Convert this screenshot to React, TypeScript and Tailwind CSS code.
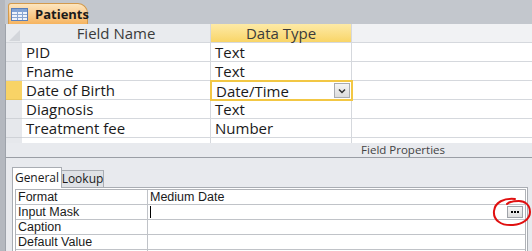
import React from "react";

const rows = [
  { name: "PID", type: "Text" },
  { name: "Fname", type: "Text" },
  { name: "Date of Birth", type: "Date/Time", active: true },
  { name: "Diagnosis", type: "Text" },
  { name: "Treatment fee", type: "Number" },
];

const props = [
  { name: "Format", value: "Medium Date" },
  { name: "Input Mask", value: "", caret: true, builder: true },
  { name: "Caption", value: "" },
  { name: "Default Value", value: "" },
  { name: "", value: "" },
];

function TableIcon() {
  return (
    <svg width="17" height="13" viewBox="0 0 17 13" className="shrink-0">
      <rect x="0.5" y="0.5" width="16" height="12" fill="#eef3fb" stroke="#5b7fb8" />
      <rect x="1" y="1" width="15" height="3" fill="#7fa2d6" />
      <line x1="1" y1="6.5" x2="16" y2="6.5" stroke="#8aa6d0" />
      <line x1="1" y1="9.5" x2="16" y2="9.5" stroke="#8aa6d0" />
      <line x1="6.5" y1="1" x2="6.5" y2="12" stroke="#8aa6d0" />
      <line x1="11.5" y1="1" x2="11.5" y2="12" stroke="#8aa6d0" />
    </svg>
  );
}

export default function App() {
  return (
    <div
      className="w-[532px] h-[251px] overflow-hidden bg-[#c3c7cd] flex flex-col text-[#1a1a1a]"
      style={{ fontFamily: '"Open Sans", "Noto Sans", sans-serif' }}
    >
      {/* tab bar */}
      <div className="h-[24px] flex items-end pl-[3px] border-l-[5px] border-[#b4b8bf] shrink-0 relative">
        <div className="h-[21px] w-[80px] flex items-center gap-[7px] pl-[2px] rounded-tl-[3px] rounded-tr-[10px] bg-gradient-to-b from-[#fde6bf] to-[#f6b45e] border border-b-0 border-[#d39a4d] text-[13px] font-bold">
          <TableIcon />
          <span className="leading-none">Patients</span>
        </div>
      </div>

      {/* body */}
      <div className="flex-1 flex flex-col border-l-[5px] border-[#b4b8bf] bg-[#e8eaee] relative">
        <div className="absolute left-0 top-0 bottom-0 w-px bg-[#9ea3ab]" />
        {/* upper grid */}
        <div className="h-[119px] bg-white flex flex-col overflow-hidden shrink-0 text-[15px] leading-[18px]">
          {/* header */}
          <div className="h-[19px] flex shrink-0 bg-[#e9ebee] border-b border-[#d5d8dd]">
            <div className="w-[17px] shrink-0 relative">
              <svg width="17" height="19" className="absolute left-0 top-0">
                <polygon points="4,17 15,6 15,17" fill="#d3d6db" />
              </svg>
            </div>
            <div className="w-[189px] shrink-0 flex items-center justify-center text-[#3b3b3b] border-r border-[#d5d8dd]">
              Field Name
            </div>
            <div className="w-[141px] shrink-0 flex items-center justify-center text-[#3b3b3b] bg-gradient-to-b from-[#fdeaa6] to-[#f9d566] border-r border-[#d5d8dd]">
              Data Type
            </div>
            <div className="flex-1 bg-[#f1f2f4]" />
          </div>
          {rows.map((r) => (
            <div key={r.name} className="h-[19px] flex shrink-0">
              <div
                className={`w-[17px] shrink-0 border-b ${
                  r.active ? "bg-[#f8d366] border-[#e9c65c]" : "bg-[#e6e8ec] border-[#cfd2d7]"
                }`}
              />
              <div className="w-[189px] shrink-0 flex items-center pl-[4px] border-b border-r border-[#d5d8dd]">
                {r.name}
              </div>
              {r.active ? (
                <div className="w-[143px] -ml-px -mt-px h-[21px] -mb-px shrink-0 flex items-center pl-[4px] pr-[1px] border-2 border-[#f2c744] bg-white relative z-10">
                  <span className="flex-1">{r.type}</span>
                  <div className="w-[16px] h-[15px] flex items-center justify-center border border-[#a8abb0] bg-gradient-to-b from-[#f4f4f4] to-[#dcdcdc]">
                    <svg width="8" height="6" viewBox="0 0 8 6">
                      <path d="M1 1.5 L4 4.5 L7 1.5" fill="none" stroke="#333" strokeWidth="1.5" />
                    </svg>
                  </div>
                </div>
              ) : (
                <div className="w-[141px] shrink-0 flex items-center pl-[4px] border-b border-r border-[#d5d8dd]">
                  {r.type}
                </div>
              )}
              <div className="flex-1 border-b border-[#d5d8dd]" />
            </div>
          ))}
          <div className="flex-1 flex">
            <div className="w-[17px] shrink-0 bg-[#e6e8ec]" />
            <div className="w-[189px] shrink-0 border-r border-[#d5d8dd]" />
            <div className="w-[141px] shrink-0 border-r border-[#d5d8dd]" />
          </div>
        </div>

        {/* field properties label */}
        <div className="h-[15px] shrink-0 border-b border-[#9a9ea5] flex items-end justify-end pr-[87px] text-[11.5px] leading-[14px] text-[#444]">
          Field Properties
        </div>

        {/* properties area */}
        <div className="flex-1 flex flex-col pl-[7px] pr-[4px] pt-[9px] text-[12px]">
          <div className="flex items-end h-[20px] shrink-0">
            <div className="h-[21px] w-[50px] flex items-center justify-center border border-b-0 border-[#a9adb3] bg-white relative z-10 -mb-px">
              General
            </div>
            <div className="h-[17px] w-[42px] flex items-center justify-center border border-l-0 border-b-0 border-[#a9adb3] bg-[#dfe2e6]">
              Lookup
            </div>
          </div>
          <div
            className="flex-1 border border-[#a9adb3] border-b-0 bg-white pl-[2px] pr-[1px] pt-[1px] text-[12.5px]"
            style={{ fontFamily: '"Liberation Sans", Arial, sans-serif' }}
          >
            <div className="border-l border-r border-t border-[#b0b3b8] relative">
              {props.map((p, i) => (
                <div key={i} className="h-[15px] flex border-b border-[#c0c3c8] leading-[14px]">
                  <div className="w-[132px] shrink-0 pl-[2px] border-r border-[#c0c3c8] whitespace-nowrap">
                    {p.name}
                  </div>
                  <div className="flex-1 pl-[2px] flex items-center relative">
                    {p.value}
                    {p.caret && <div className="w-px h-[12px] bg-black" />}
                    {p.builder && (
                      <div className="absolute right-[2px] top-[1px] w-[16px] h-[12px] border border-[#9fa3a9] bg-gradient-to-b from-[#f6f6f6] to-[#dedede] flex items-center justify-center">
                        <svg width="8" height="2" viewBox="0 0 8 2">
                          <rect x="0" y="0" width="2" height="2" fill="#000" />
                          <rect x="3" y="0" width="2" height="2" fill="#000" />
                          <rect x="6" y="0" width="2" height="2" fill="#000" />
                        </svg>
                      </div>
                    )}
                  </div>
                </div>
              ))}
            </div>
          </div>
        </div>

        {/* red annotation */}
        <svg className="absolute left-[486px] top-[173px]" width="41" height="31" viewBox="0 0 41 31">
          <path
            d="M24 2 C13 1 4 5 3 14 C2 23 10 29 22 28 C32 27 39 22 39 15 C39 8 34 4 28 4 C24 4 18 5 16 7"
            fill="none"
            stroke="#e01010"
            strokeWidth="2"
            strokeLinecap="round"
          />
        </svg>
      </div>
    </div>
  );
}
